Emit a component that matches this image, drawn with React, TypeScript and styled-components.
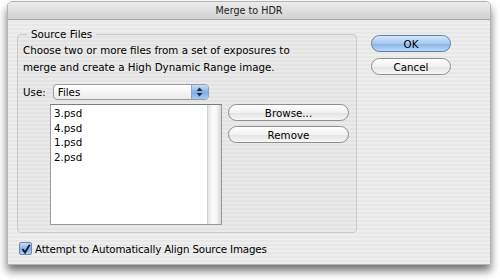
import React from 'react';
import styled, { createGlobalStyle, css } from 'styled-components';

const GlobalStyle = createGlobalStyle`
    html, body {
        margin: 0;
        padding: 0;
        background: #ffffff;
    }
    body {
        font-family: "DejaVu Sans", "Liberation Sans", sans-serif;
        font-size: 10.3px;
        color: #000;
    }
`;

const Page = styled.div`
    width: 500px;
    height: 280px;
    padding: 1px 9px 0 7px;
    box-sizing: border-box;
    overflow: hidden;
`;

const Window = styled.div`
    width: 484px;
    height: 264px;
    display: flex;
    flex-direction: column;
    border-radius: 5px 5px 0 0;
    border: 1px solid #b4b4b4;
    box-sizing: border-box;
    box-shadow: 0 6px 9px rgba(0, 0, 0, 0.55);
    background: repeating-linear-gradient(
        to bottom,
        #eeeeee 0px,
        #eeeeee 2px,
        #e7e7e7 2px,
        #e7e7e7 4px
    );
    overflow: hidden;
`;

const TitleBar = styled.div`
    height: 17px;
    flex: 0 0 17px;
    display: flex;
    align-items: center;
    justify-content: center;
    background: linear-gradient(to bottom, #ececec, #d2d2d2);
    border-bottom: 1px solid #a8a8a8;
    font-size: 9.6px;
    color: #222;
`;

const Body = styled.div`
    flex: 1;
    display: flex;
    flex-direction: column;
    padding: 8px 0 0 9px;
`;

const Main = styled.div`
    display: flex;
    align-items: flex-start;
`;

const Group = styled.fieldset`
    width: 340px;
    height: 205px;
    box-sizing: border-box;
    margin: 0;
    padding: 0 0 0 5px;
    border: 1px solid #c9c9c9;
    border-radius: 4px;
    background: rgba(0, 0, 0, 0.015);

    legend {
        margin-left: 4px;
        padding: 0 4px;
        line-height: 13px;
    }
`;

const Description = styled.p`
    margin: 1px 0 0;
    line-height: 17px;
`;

const UseRow = styled.div`
    display: flex;
    align-items: center;
    margin-top: 8px;
    gap: 7px;
`;

const Popup = styled.div`
    width: 156px;
    height: 16px;
    box-sizing: border-box;
    display: flex;
    border: 1px solid #9c9c9c;
    border-radius: 4px;
    background: linear-gradient(to bottom, #ffffff, #ececec);
    overflow: hidden;

    span {
        flex: 1;
        padding-left: 4px;
        line-height: 14px;
    }
`;

const PopupArrows = styled.div`
    width: 16px;
    display: flex;
    align-items: center;
    justify-content: center;
    background: linear-gradient(to bottom, #c8dcf5, #7eaee6 55%, #a9cbf2);
    border-left: 1px solid #8aa6c8;
`;

const FilesRow = styled.div`
    display: flex;
    align-items: flex-start;
    margin: 4px 0 0 27px;
    gap: 6px;
`;

const FileList = styled.div`
    width: 172px;
    height: 121px;
    box-sizing: border-box;
    display: flex;
    border: 1px solid #9a9a9a;
    border-top-color: #7c7c7c;
    background: #fff;
`;

const Items = styled.ul`
    flex: 1;
    list-style: none;
    margin: 0;
    padding: 1px 0 0 3px;

    li {
        line-height: 14.6px;
    }
`;

const Track = styled.div`
    width: 13px;
    border-left: 1px solid #cfcfcf;
    background: linear-gradient(to right, #e4e4e4, #fdfdfd 40%, #f3f3f3 70%, #d6d6d6);
`;

const SideButtons = styled.div`
    display: flex;
    flex-direction: column;
    gap: 5px;
`;

const Button = styled.div<{ $primary?: boolean; $width: number }>`
    width: ${(p) => p.$width}px;
    height: 17px;
    box-sizing: border-box;
    display: flex;
    align-items: center;
    justify-content: center;
    border: 1px solid #8e8e8e;
    border-radius: 9px;
    background: linear-gradient(to bottom, #ffffff, #f1f1f1 50%, #e2e2e2 51%, #f7f7f7);
    ${(p) =>
        p.$primary &&
        css`
            border-color: #5e7fa8;
            background: linear-gradient(to bottom, #d5e6fa, #a9c9ef 50%, #86b2e8 51%, #bcd8f8);
        `}
`;

const DialogButtons = styled.div`
    display: flex;
    flex-direction: column;
    gap: 6px;
    margin: 7px 0 0 14px;
`;

const CheckRow = styled.label`
    display: flex;
    align-items: center;
    gap: 3px;
    margin: 9px 0 0 2px;
    letter-spacing: -0.15px;
`;

const Check = styled.span`
    width: 13px;
    height: 13px;
    box-sizing: border-box;
    display: flex;
    align-items: center;
    justify-content: center;
    border: 1px solid #6f87a6;
    border-radius: 2px;
    background: linear-gradient(to bottom, #c9dcf4, #86b1e4 55%, #b3d0f3);
`;

const files = ['3.psd', '4.psd', '1.psd', '2.psd'];

export default function App() {
    return (
        <Page>
            <GlobalStyle />
            <Window>
                <TitleBar>Merge to HDR</TitleBar>
                <Body>
                    <Main>
                        <Group>
                            <legend>Source Files</legend>
                            <Description>
                                Choose two or more files from a set of exposures to
                                <br />
                                merge and create a High Dynamic Range image.
                            </Description>
                            <UseRow>
                                <span>Use:</span>
                                <Popup>
                                    <span>Files</span>
                                    <PopupArrows>
                                        <svg width="7" height="10" viewBox="0 0 7 10">
                                            <path d="M3.5 0.5 L6.5 4 L0.5 4 Z" fill="#1a2a44" />
                                            <path d="M3.5 9.5 L6.5 6 L0.5 6 Z" fill="#1a2a44" />
                                        </svg>
                                    </PopupArrows>
                                </Popup>
                            </UseRow>
                            <FilesRow>
                                <FileList>
                                    <Items>
                                        {files.map((f) => (
                                            <li key={f}>{f}</li>
                                        ))}
                                    </Items>
                                    <Track />
                                </FileList>
                                <SideButtons>
                                    <Button $width={121}>Browse...</Button>
                                    <Button $width={121}>Remove</Button>
                                </SideButtons>
                            </FilesRow>
                        </Group>
                        <DialogButtons>
                            <Button $primary $width={80}>OK</Button>
                            <Button $width={80}>Cancel</Button>
                        </DialogButtons>
                    </Main>
                    <CheckRow>
                        <Check>
                            <svg width="10" height="10" viewBox="0 0 10 10">
                                <path
                                    d="M1.5 5 L4 8.5 L8.8 0.8"
                                    fill="none"
                                    stroke="#10213d"
                                    strokeWidth="2"
                                />
                            </svg>
                        </Check>
                        Attempt to Automatically Align Source Images
                    </CheckRow>
                </Body>
            </Window>
        </Page>
    );
}
